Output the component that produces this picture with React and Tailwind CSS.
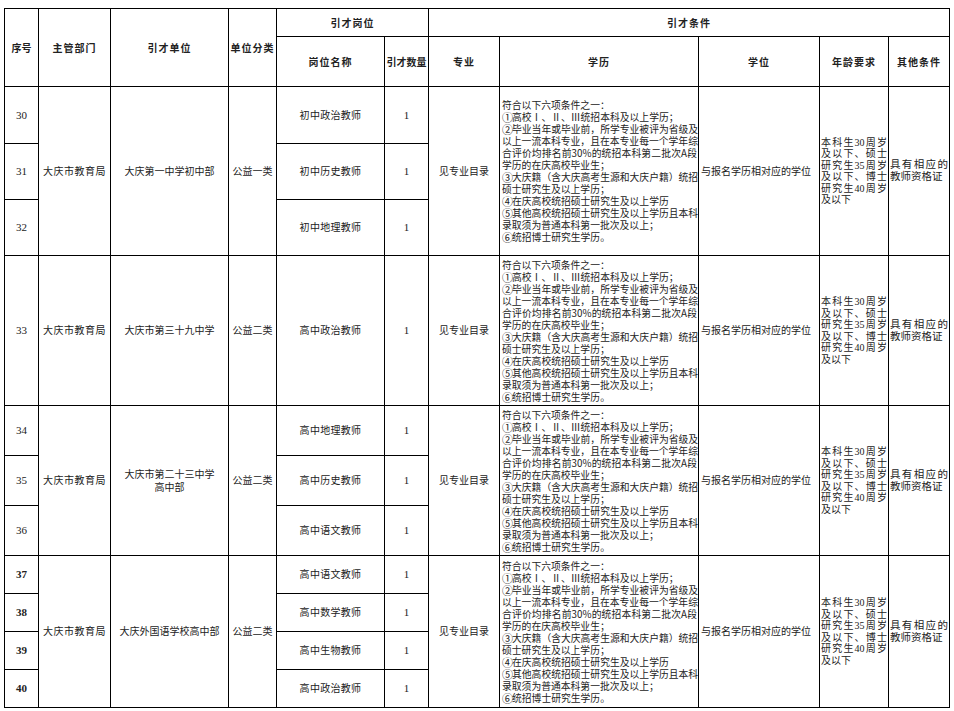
import React from "react";

const groups = [
    {
        dept: "大庆市教育局",
        unit: ["大庆第一中学初中部"],
        kind: "公益一类",
        rows: [
            { no: "30", post: "初中政治教师", h: 57 },
            { no: "31", post: "初中历史教师", h: 56 },
            { no: "32", post: "初中地理教师", h: 56 },
        ],
    },
    {
        dept: "大庆市教育局",
        unit: ["大庆市第三十九中学"],
        kind: "公益二类",
        rows: [{ no: "33", post: "高中政治教师", h: 150 }],
    },
    {
        dept: "大庆市教育局",
        unit: ["大庆市第二十三中学", "高中部"],
        kind: "公益二类",
        rows: [
            { no: "34", post: "高中地理教师", h: 50 },
            { no: "35", post: "高中历史教师", h: 50 },
            { no: "36", post: "高中语文教师", h: 50 },
        ],
    },
    {
        dept: "大庆市教育局",
        unit: ["大庆外国语学校高中部"],
        kind: "公益二类",
        bold: true,
        rows: [
            { no: "37", post: "高中语文教师", h: 38 },
            { no: "38", post: "高中数学教师", h: 38 },
            { no: "39", post: "高中生物教师", h: 38 },
            { no: "40", post: "高中政治教师", h: 38 },
        ],
    },
];

// [mark, text, justify whole line]
const eduLines = [
    ["", "符合以下六项条件之一：", false],
    ["①", "高校Ⅰ、Ⅱ、Ⅲ统招本科及以上学历；", false],
    ["②", "毕业当年或毕业前，所学专业被评为省级及", true],
    ["", "以上一流本科专业，且在本专业每一个学年综", true],
    ["", "合评价均排名前30%的统招本科第二批次A段", true],
    ["", "学历的在庆高校毕业生；", false],
    ["③", "大庆籍（含大庆高考生源和大庆户籍）统招", true],
    ["", "硕士研究生及以上学历；", false],
    ["④", "在庆高校统招硕士研究生及以上学历", false],
    ["⑤", "其他高校统招硕士研究生及以上学历且本科", true],
    ["", "录取须为普通本科第一批次及以上；", false],
    ["⑥", "统招博士研究生学历。", false],
];

const ageLines = ["本科生30周岁", "及以下、硕士", "研究生35周岁", "及以下、博士", "研究生40周岁"];

const cols = [34, 72, 118, 48, 108, 44, 71, 199, 121, 69, 61];

const th = "border border-black text-center align-middle font-bold text-[10px] text-[#222] tracking-[1px]";
const td = "border border-black text-center align-middle text-[10px] text-[#222]";

function Education() {
    return (
        <div
            className="pl-[2px] pr-[1px] text-left text-[9.8px] leading-[12px] whitespace-nowrap"
            style={{ fontFamily: '"Noto Sans CJK SC", sans-serif' }}
        >
            {eduLines.map(([m, t, j], i) => (
                <div key={i} className={j ? "text-justify [text-align-last:justify]" : ""}>
                    {m && (
                        <span className="inline-block w-[10px] text-center text-[11px] leading-[12px] align-top">
                            {m}
                        </span>
                    )}
                    {t}
                </div>
            ))}
        </div>
    );
}

function Age() {
    return (
        <div className="px-[1px] text-left text-[10px] leading-[11.5px] whitespace-nowrap">
            {ageLines.map((t) => (
                <div key={t} className="text-justify [text-align-last:justify]">
                    {t}
                </div>
            ))}
            <div>及以下</div>
        </div>
    );
}

function Other() {
    return (
        <div className="px-[1px] text-left text-[10.5px] leading-[12px] whitespace-nowrap">
            <div className="text-justify [text-align-last:justify]">具有相应的</div>
            <div>教师资格证</div>
        </div>
    );
}

export default function App() {
    return (
        <div
            className="w-[954px] h-[711px] bg-white overflow-hidden pl-[4px] pt-[8px]"
            style={{ fontFamily: '"Liberation Serif", "Noto Sans CJK SC", serif' }}
        >
            <table className="border-collapse table-fixed w-[945px]">
                <colgroup>
                    {cols.map((w, i) => (
                        <col key={i} style={{ width: w }} />
                    ))}
                </colgroup>
                <thead style={{ fontFamily: '"Noto Sans CJK SC", sans-serif' }}>
                    <tr className="h-[28px]">
                        <th rowSpan={2} className={th + " tracking-normal"}>序号</th>
                        <th rowSpan={2} className={th}>主管部门</th>
                        <th rowSpan={2} className={th}>引才单位</th>
                        <th rowSpan={2} className={th}>单位分类</th>
                        <th colSpan={2} className={th}>引才岗位</th>
                        <th colSpan={5} className={th}>引才条件</th>
                    </tr>
                    <tr className="h-[50px]">
                        <th className={th}>岗位名称</th>
                        <th className={th + " tracking-normal"}>引才数量</th>
                        <th className={th}>专业</th>
                        <th className={th}>学历</th>
                        <th className={th}>学位</th>
                        <th className={th}>年龄要求</th>
                        <th className={th}>其他条件</th>
                    </tr>
                </thead>
                <tbody>
                    {groups.map((g) =>
                        g.rows.map((r, i) => (
                            <tr key={r.no} style={{ height: r.h }}>
                                <td className={td + " text-[11px]" + (g.bold ? " font-bold" : "")}>{r.no}</td>
                                {i === 0 && (
                                    <>
                                        <td rowSpan={g.rows.length} className={td + " tracking-[0.5px]"}>
                                            {g.dept}
                                        </td>
                                        <td rowSpan={g.rows.length} className={td + " leading-[13px]"}>
                                            {g.unit.map((u) => (
                                                <div key={u}>{u}</div>
                                            ))}
                                        </td>
                                        <td rowSpan={g.rows.length} className={td}>
                                            {g.kind}
                                        </td>
                                    </>
                                )}
                                <td className={td + " tracking-[0.3px]"}>{r.post}</td>
                                <td className={td + " text-[11px]"}>1</td>
                                {i === 0 && (
                                    <>
                                        <td rowSpan={g.rows.length} className={td}>
                                            见专业目录
                                        </td>
                                        <td rowSpan={g.rows.length} className={td + " p-0"}>
                                            <Education />
                                        </td>
                                        <td rowSpan={g.rows.length} className={td + " text-left pl-[2px] text-[9.8px]"}>
                                            与报名学历相对应的学位
                                        </td>
                                        <td rowSpan={g.rows.length} className={td + " p-0"}>
                                            <Age />
                                        </td>
                                        <td rowSpan={g.rows.length} className={td + " p-0"}>
                                            <Other />
                                        </td>
                                    </>
                                )}
                            </tr>
                        ))
                    )}
                </tbody>
            </table>
        </div>
    );
}
